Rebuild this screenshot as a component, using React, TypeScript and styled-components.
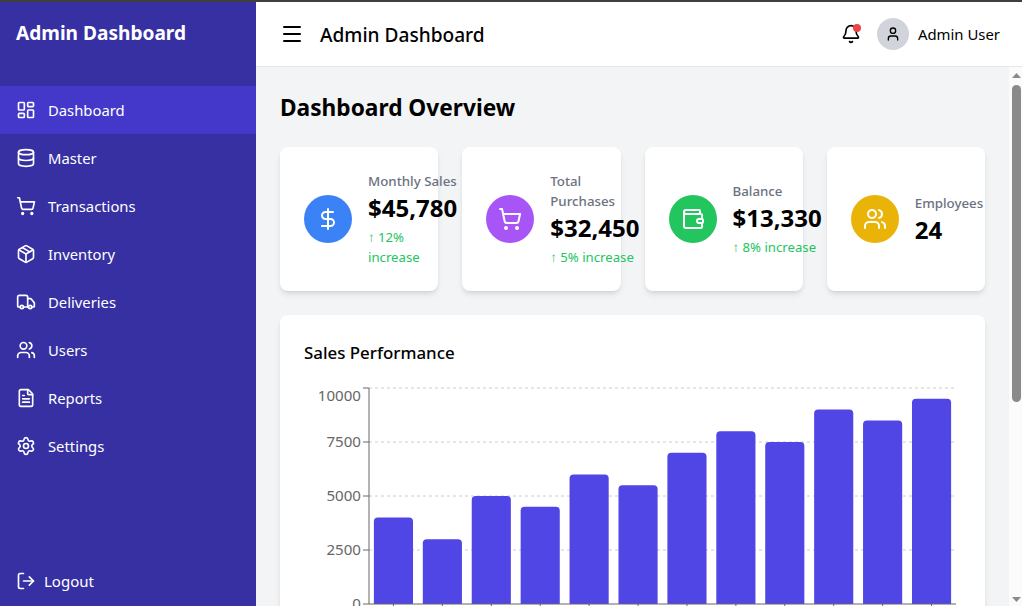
import React from "react";
import styled, { createGlobalStyle } from "styled-components";
import {
  Bell, Database, DollarSign, FileText, LayoutDashboard, LogOut, Menu, Package,
  Settings, ShoppingCart, Truck, User, Users, Wallet,
} from "lucide-react";

const FONT = `"Noto Sans", "Open Sans", "Liberation Sans", sans-serif`;

const Global = createGlobalStyle`
  * { box-sizing: border-box; }
  html, body { margin: 0; height: 100%; overflow: hidden; }
  body { font-family: ${FONT}; color: #000; background: #f3f4f6; }
  #root { height: 100%; }
`;

const Page = styled.div`
  height: 100vh;
  display: flex;
  flex-direction: column;
`;
const TopStrip = styled.div`
  height: 2px;
  flex: none;
  background: #3f3f3f;
`;
const Shell = styled.div`
  flex: 1;
  min-height: 0;
  display: flex;
`;
const Sidebar = styled.aside`
  width: 256px;
  flex: none;
  background: #3730a3;
  color: #fff;
  display: flex;
  flex-direction: column;
  padding-bottom: 1px;
`;
const Brand = styled.h1`
  margin: 0 0 24px;
  padding: 17px 16px 15px;
  font-size: 19.1px;
  line-height: 28px;
  font-weight: 700;
`;
const Nav = styled.nav`
  flex: 1;
  display: flex;
  flex-direction: column;
`;
const NavItem = styled.a<{ $active?: boolean }>`
  display: flex;
  align-items: center;
  gap: 12px;
  height: 48px;
  padding: 0 16px;
  font-size: 14.8px;
  line-height: 24px;
  color: #fff;
  background: ${(p) => (p.$active ? "#4338ca" : "transparent")};
`;
const LogoutButton = styled.a`
  display: flex;
  align-items: center;
  gap: 8px;
  height: 48px;
  padding: 0 16px;
  font-size: 15px;
  color: #fff;
`;
const Column = styled.div`
  flex: 1;
  min-width: 0;
  display: flex;
  flex-direction: column;
`;
const Header = styled.header`
  height: 65px;
  flex: none;
  background: #fff;
  border-bottom: 1px solid #e5e7eb;
  display: flex;
  align-items: center;
  justify-content: space-between;
  padding: 0 22px 0 24px;
`;
const HeaderLeft = styled.div`
  display: flex;
  align-items: center;
  gap: 16px;
`;
const HeaderTitle = styled.div`
  font-size: 19.1px;
  line-height: 28px;
  font-weight: 500;
  padding-top: 1px;
`;
const HeaderRight = styled.div`
  display: flex;
  align-items: center;
  gap: 16px;
`;
const BellWrap = styled.div`
  position: relative;
  width: 20px;
  height: 20px;
`;
const Dot = styled.span`
  position: absolute;
  top: 0;
  right: 0;
  width: 8px;
  height: 8px;
  border-radius: 50%;
  background: #ef4444;
`;
const Profile = styled.div`
  display: flex;
  align-items: center;
  gap: 9px;
  font-size: 14.9px;
`;
const Avatar = styled.div`
  width: 32px;
  height: 32px;
  border-radius: 50%;
  background: #d1d5db;
  display: flex;
  align-items: center;
  justify-content: center;
`;
const Main = styled.main`
  flex: 1;
  min-height: 0;
  display: flex;
  background: #f3f4f6;
`;
const Content = styled.div`
  flex: 1;
  min-width: 0;
  overflow: hidden;
  padding: 24px;
`;
const ScrollRail = styled.div`
  width: 13px;
  flex: none;
  background: #fbfbfb;
  display: flex;
  flex-direction: column;
`;
const ScrollArrow = styled.svg<{ $down?: boolean }>`
  display: block;
  flex: none;
  width: 9px;
  height: 5px;
  margin: ${(p) => (p.$down ? "0 1px 4px 3px" : "6px 1px 6px 3px")};
  fill: #8a8a8a;
`;
const ScrollThumb = styled.div`
  height: 317px;
  flex: none;
  margin: 1px 1px 0 3px;
  border-radius: 5px;
  background: #8a8a8a;
`;
const ScrollSpacer = styled.div`
  flex: 1;
`;
const PageTitle = styled.h2`
  margin: 0 0 24px;
  padding-top: 2px;
  height: 32px;
  font-size: 22.7px;
  line-height: 30px;
  font-weight: 700;
`;
const CardRow = styled.div`
  display: grid;
  grid-template-columns: repeat(4, minmax(0, 1fr));
  gap: 24px;
  margin-bottom: 24px;
`;
const StatCard = styled.div`
  background: #fff;
  border-radius: 8px;
  box-shadow: 0 4px 6px -1px rgba(0, 0, 0, 0.1), 0 2px 4px -2px rgba(0, 0, 0, 0.1);
  padding: 24px;
  display: flex;
  align-items: center;
`;
const IconCircle = styled.div<{ $color: string }>`
  width: 48px;
  height: 48px;
  flex: none;
  margin-right: 16px;
  border-radius: 50%;
  background: ${(p) => p.$color};
  color: #fff;
  display: flex;
  align-items: center;
  justify-content: center;
`;
const StatLabel = styled.div<{ $nowrap?: boolean }>`
  font-size: 13.3px;
  line-height: 20px;
  font-weight: 500;
  color: #6b7280;
  white-space: ${(p) => (p.$nowrap ? "nowrap" : "normal")};
`;
const StatValue = styled.div`
  height: 32px;
  padding-top: 1px;
  font-size: 24px;
  line-height: 31px;
  font-weight: 700;
`;
const StatDelta = styled.div`
  margin-top: 4px;
  font-size: 13.2px;
  line-height: 20px;
  color: #22c55e;
`;
const ChartCard = styled.section`
  background: #fff;
  border-radius: 8px;
  box-shadow: 0 4px 6px -1px rgba(0, 0, 0, 0.1), 0 2px 4px -2px rgba(0, 0, 0, 0.1);
  padding: 24px;
`;
const ChartTitle = styled.h3`
  margin: 0 0 16px;
  font-size: 16.9px;
  line-height: 28px;
  font-weight: 500;
`;
const ChartSvg = styled.svg`
  display: block;
  width: 100%;
  height: 256px;
  font-family: ${FONT};
`;

const navItems = [
  { label: "Dashboard", icon: LayoutDashboard, active: true },
  { label: "Master", icon: Database },
  { label: "Transactions", icon: ShoppingCart },
  { label: "Inventory", icon: Package },
  { label: "Deliveries", icon: Truck },
  { label: "Users", icon: Users },
  { label: "Reports", icon: FileText },
  { label: "Settings", icon: Settings },
];

const stats = [
  { label: "Monthly Sales", value: "$45,780", delta: "↑ 12% increase", color: "#3b82f6", icon: DollarSign, nowrap: true },
  { label: "Total Purchases", value: "$32,450", delta: "↑ 5% increase", color: "#a855f7", icon: ShoppingCart },
  { label: "Balance", value: "$13,330", delta: "↑ 8% increase", color: "#22c55e", icon: Wallet },
  { label: "Employees", value: "24", color: "#eab308", icon: Users },
];

const sales = [4000, 3000, 5000, 4500, 6000, 5500, 7000, 8000, 7500, 9000, 8500, 9500];

function SalesChart() {
  const left = 65;
  const right = 652;
  const top = 5;
  const bottom = 221;
  const band = (right - left) / sales.length;
  const barW = band * 0.8;
  const y = (v: number) => bottom - (v / 10000) * (bottom - top);
  const ticks = [0, 2500, 5000, 7500, 10000];
  return (
    <ChartSvg viewBox="0 0 657 256">
      {ticks.slice(1).map((t) => (
        <line key={t} x1={left} x2={right} y1={y(t)} y2={y(t)} stroke="#ccc" strokeDasharray="3 3" />
      ))}
      {sales.map((v, i) => {
        const x = left + band * i + band * 0.1;
        const t = y(v);
        return (
          <path
            key={i}
            fill="#4f46e5"
            d={`M${x},${bottom}V${t + 4}A4,4 0 0 1 ${x + 4},${t}H${x + barW - 4}A4,4 0 0 1 ${x + barW},${t + 4}V${bottom}Z`}
          />
        );
      })}
      <line x1={left} x2={left} y1={top} y2={bottom} stroke="#666" />
      <line x1={left} x2={right} y1={bottom} y2={bottom} stroke="#666" />
      {ticks.map((t) => (
        <g key={t}>
          <line x1={left - 6} x2={left} y1={y(t)} y2={y(t)} stroke="#666" />
          <text x={left - 8} y={y(t) + (t === 10000 ? 13 : 5)} textAnchor="end" fontSize="15.1" fill="#666">{t}</text>
        </g>
      ))}
      {sales.map((_, i) => {
        const c = left + band * (i + 0.5);
        return <line key={i} x1={c} x2={c} y1={bottom} y2={bottom + 6} stroke="#666" />;
      })}
    </ChartSvg>
  );
}

export default function App() {
  return (
    <Page>
      <Global />
      <TopStrip />
      <Shell>
        <Sidebar>
          <Brand>Admin Dashboard</Brand>
          <Nav>
            {navItems.map(({ label, icon: Icon, active }) => (
              <NavItem key={label} $active={active}>
                <Icon size={20} />
                {label}
              </NavItem>
            ))}
          </Nav>
          <LogoutButton>
            <LogOut size={20} />
            Logout
          </LogoutButton>
        </Sidebar>
        <Column>
          <Header>
            <HeaderLeft>
              <Menu size={24} />
              <HeaderTitle>Admin Dashboard</HeaderTitle>
            </HeaderLeft>
            <HeaderRight>
              <BellWrap>
                <Bell size={20} />
                <Dot />
              </BellWrap>
              <Profile>
                <Avatar>
                  <User size={16} />
                </Avatar>
                Admin User
              </Profile>
            </HeaderRight>
          </Header>
          <Main>
            <Content>
              <PageTitle>Dashboard Overview</PageTitle>
              <CardRow>
                {stats.map(({ label, value, delta, color, icon: Icon, nowrap }) => (
                  <StatCard key={label}>
                    <IconCircle $color={color}>
                      <Icon size={24} />
                    </IconCircle>
                    <div>
                      <StatLabel $nowrap={nowrap}>{label}</StatLabel>
                      <StatValue>{value}</StatValue>
                      {delta && <StatDelta>{delta}</StatDelta>}
                    </div>
                  </StatCard>
                ))}
              </CardRow>
              <ChartCard>
                <ChartTitle>Sales Performance</ChartTitle>
                <SalesChart />
              </ChartCard>
            </Content>
            <ScrollRail>
              <ScrollArrow viewBox="0 0 9 5"><polygon points="4.5,0 9,5 0,5" /></ScrollArrow>
              <ScrollThumb />
              <ScrollSpacer />
              <ScrollArrow $down viewBox="0 0 9 5"><polygon points="0,0 9,0 4.5,5" /></ScrollArrow>
            </ScrollRail>
          </Main>
        </Column>
      </Shell>
    </Page>
  );
}
